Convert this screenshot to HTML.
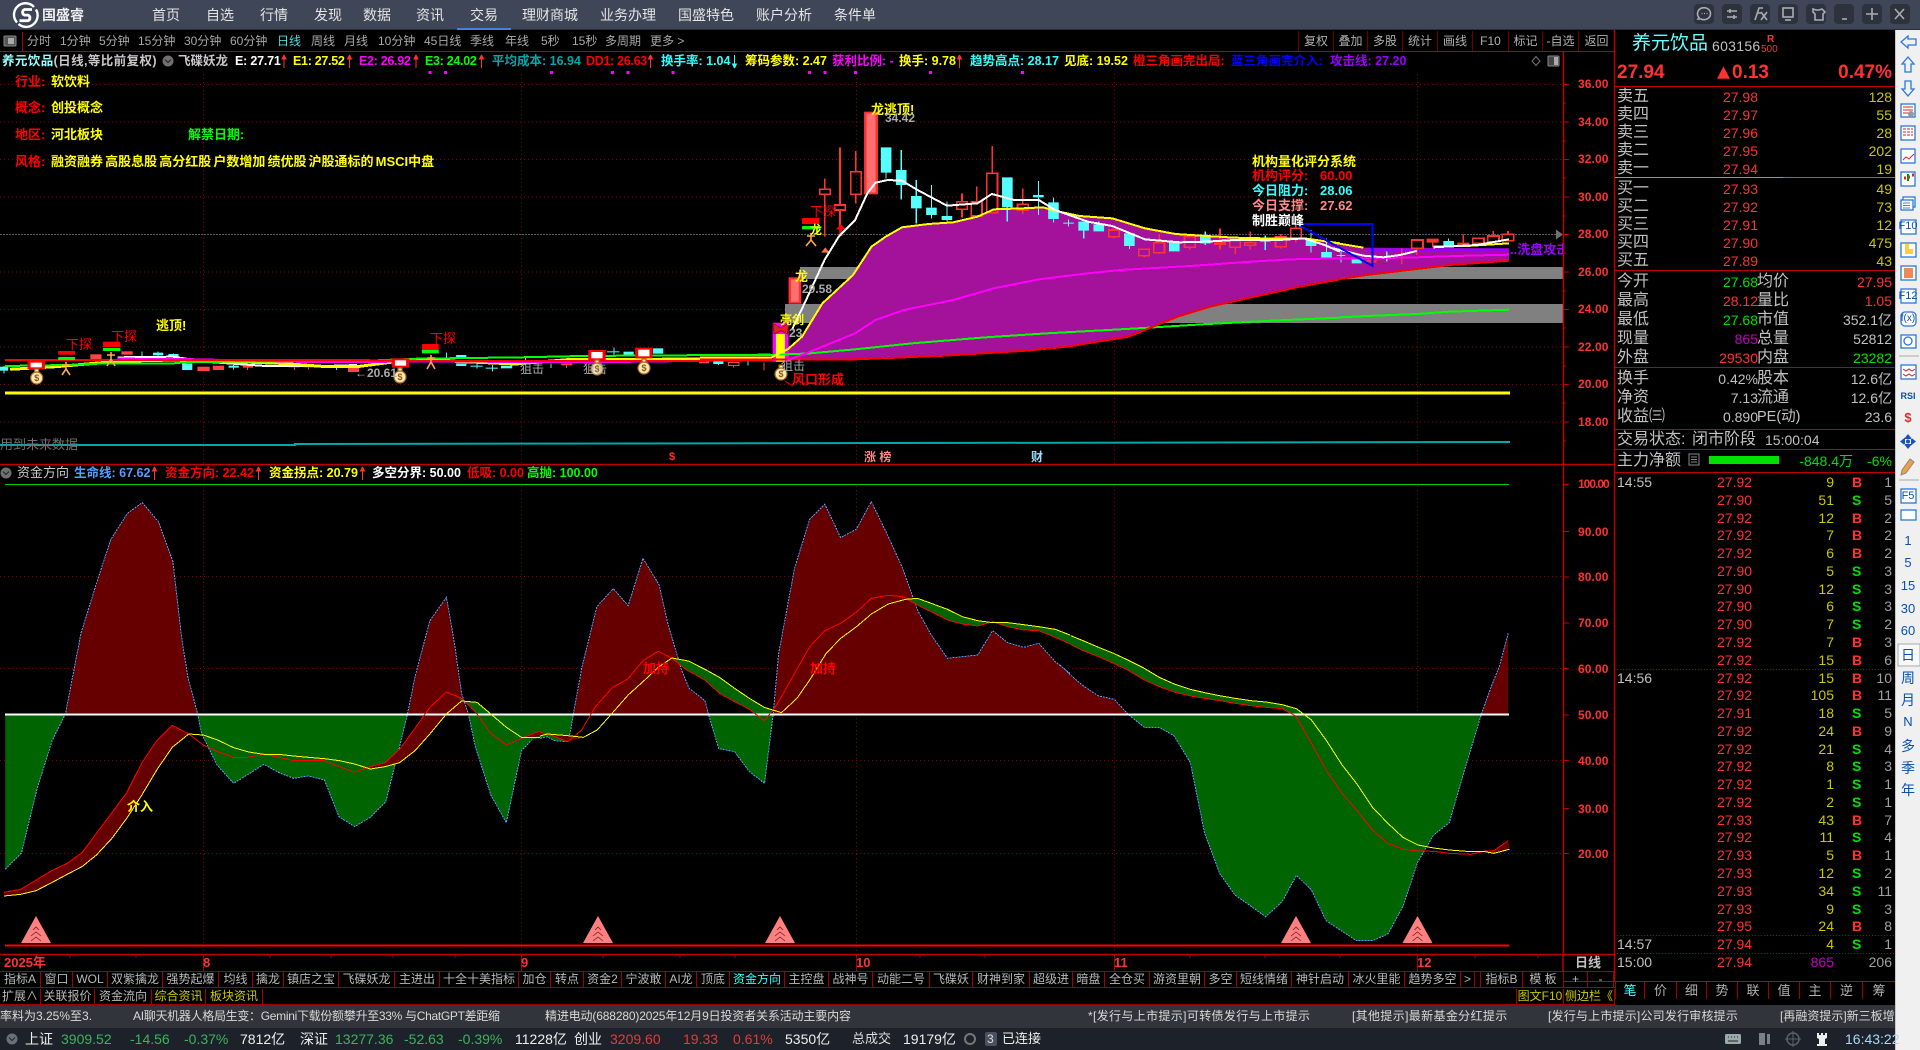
<!DOCTYPE html>
<html lang="zh"><head><meta charset="utf-8"><title>国盛睿</title>
<style>
html,body{margin:0;padding:0;background:#000}
body{width:1920px;height:1050px;position:relative;overflow:hidden;font-family:"Liberation Sans","Noto Sans CJK SC",sans-serif;color:#c0c0c0}
.t{position:absolute;white-space:nowrap;height:18px;line-height:18px;font-size:13px}
.bd{font-weight:700}
.p{position:absolute}
.per{position:absolute;top:32px;font-size:12px;line-height:18px;color:#a8a8a8;white-space:nowrap}
.tb{position:absolute;top:31px;height:20px;line-height:20px;font-size:12px;color:#b0b0b0;text-align:center;border-left:1px solid #6a0000;box-sizing:border-box}
.ax{position:absolute;left:1578px;font-size:12px;font-weight:700;color:#ff3232;height:16px;line-height:16px;letter-spacing:.1px}
.h{position:absolute;top:52px;height:18px;line-height:18px;font-size:12.5px;font-weight:700;white-space:nowrap}
.h2{top:464px}
.c{position:absolute;white-space:nowrap;font-size:16px;color:#c0c0c0;height:20px;line-height:20px;margin-top:1px}
.v{position:absolute;white-space:nowrap;font-size:14px;height:20px;line-height:20px;margin-top:1px}
.l{left:1617px}
.a{right:162px;color:#ff3232}
.y{right:28px;color:#c8c800}
.k{left:1757px}
.rr{right:28px}
.r{position:absolute;left:1615px;width:280px;height:18px;line-height:18px;font-size:14px}
.r i,.r b,.r u,.r s,.r em{position:absolute;top:0;font-style:normal;text-decoration:none;font-weight:400}
.r i{left:2px;color:#c0c0c0}.r b{left:102px;color:#ff3232}.r u{right:61px;color:#c8c800}.r s{left:237px;font-weight:700;color:#00e000}.r s.B{color:#ff3232}.r em{right:3px;color:#a0a0a0}
.btn{position:absolute;top:972px;height:15px;line-height:15px;font-size:12px;color:#b8b8b8;text-align:center;border-right:1px solid #a00000;white-space:nowrap;overflow:hidden;box-sizing:border-box}
.btn2{top:989px}
.tab{position:absolute;top:982px;height:17px;line-height:17px;font-size:13px;color:#b0b0b0;text-align:center;border-left:1px solid #a00000;box-sizing:border-box}
.tk{position:absolute;top:1006px;font-size:12px;line-height:20px;color:#d8d8d8;white-space:nowrap}
.st{position:absolute;top:1029px;font-size:14px;line-height:20px;white-space:nowrap}
.sn{position:absolute;left:1896px;width:24px;text-align:center;font-size:13px;line-height:16px;color:#0a50b0}
.lg{position:absolute;font-size:12px;font-weight:700;white-space:nowrap;height:16px;line-height:16px}
</style></head><body>

<svg class="p" style="left:0;top:0" width="1920" height="1050" viewBox="0 0 1920 1050">
<defs>
<clipPath id="ab"><rect x="-500" y="-100" width="4000" height="802"/></clipPath>
<clipPath id="be"><rect x="-500" y="702" width="4000" height="1000"/></clipPath>
<style>.ns{vector-effect:non-scaling-stroke;fill:none;shape-rendering:crispEdges}</style>
</defs>
<rect width="1920" height="1050" fill="#000"/>

<!-- grid main -->
<g stroke="#8a0000" stroke-width="1" stroke-dasharray="1 3" fill="none">
<path d="M0 84.5H1563M0 122H1563M0 159.5H1563M0 197H1563M0 272H1563M0 309.5H1563M0 347H1563M0 384.5H1563M0 422H1563"/>
<path d="M203.5 74V464M521.5 74V464M856.5 74V464M1114.5 74V464M1417.5 74V464"/>
<path d="M0 576.5H1563M0 668.5H1563M0 760.5H1563M0 853.5H1563"/>
<path d="M203.5 486V954M521.5 486V954M856.5 486V954M1114.5 486V954M1417.5 486V954"/>
</g>
<path d="M0 234.5H1563" stroke="#5a5a5a" stroke-dasharray="2 1" fill="none"/>

<!-- gray zones -->
<rect x="800" y="267" width="763" height="12" fill="#808080"/>
<rect x="785" y="304" width="778" height="19" fill="#808080"/>

<!-- main chart zoom7 coords -->
<g transform="translate(700,90) scale(.40816,.33333)">
<polygon fill="#a4119a" points="215,778 250,740 300,640 375,555 420,470 455,440 495,412 560,402 620,397 680,380 720,358 790,355 840,352 880,365 930,378 1010,385 1090,415 1165,432 1240,438 1310,443 1380,445 1480,445 1568,460 1568,568 1470,590 1340,625 1250,650 1170,680 1100,715 1050,740 900,770 800,782 600,797 380,808 215,810"/>
</g>
<g transform="translate(1100,140) scale(.33333,.33333)">
<polygon fill="#a4119a" points="700,308 790,323 1227,325 1227,362 1050,375 950,387 800,405 700,415"/>
<rect x="800" y="325" width="427" height="10" fill="#9900ff"/>
</g>

<!-- left flat region -->
<g transform="translate(0,300) scale(.5102,.33333)">
<path class="ns" stroke="#3ff" stroke-width="1" d="M8 198V220M278 155V170M310 155V172M340 160V176M458 195V208M660 195V210M875 158V175M935 190V205M965 195V215M1030 168V195M1080 190V204M1203 142V165M1408 180V195M1466 180V196"/>
<g fill="#5ff"><rect x="0" y="200" width="16" height="12"/><rect x="300" y="158" width="20" height="8"/><rect x="330" y="162" width="20" height="10"/><rect x="357" y="190" width="20" height="20"/><rect x="448" y="197" width="20" height="6"/><rect x="650" y="198" width="20" height="6"/><rect x="894" y="165" width="20" height="9"/><rect x="894" y="190" width="20" height="8"/><rect x="922" y="197" width="24" height="3"/><rect x="952" y="203" width="24" height="3"/><rect x="982" y="197" width="22" height="8"/><rect x="1190" y="154" width="24" height="3"/><rect x="1222" y="155" width="20" height="10"/><rect x="1280" y="145" width="20" height="16"/><rect x="1398" y="184" width="20" height="8"/></g>
<g fill="#f44"><rect x="177" y="163" width="22" height="14"/><rect x="387" y="200" width="24" height="13"/><rect x="417" y="197" width="22" height="13"/><rect x="238" y="154" width="22" height="10"/><rect x="476" y="197" width="20" height="6"/><rect x="566" y="198" width="22" height="4"/><rect x="595" y="198" width="20" height="4"/><rect x="682" y="204" width="22" height="12"/><rect x="1100" y="190" width="22" height="6"/><rect x="1370" y="182" width="20" height="8"/></g>
<path class="ns" stroke="#f44" stroke-width="1" d="M1428 187h20v10h-20zM1438 197V203M1497 188V212M485 203V210M577 202V210M605 202V208M1110 196V204"/>
<polyline class="ns" stroke="#fff" stroke-width="2" points="230,172 340,170 400,185 520,198 640,198 700,195"/>
<polyline class="ns" stroke="#ff0" stroke-width="3" points="20,208 110,200 230,184 340,180 480,186 550,190 640,200 700,200 810,178 1010,192 1120,178 1280,178 1510,175"/>
<polyline class="ns" stroke="#0f0" stroke-width="2" points="10,198 130,195 210,190 340,190 370,186 720,182 820,176 1020,172 1140,168 1510,164"/>
<polyline class="ns" stroke="#f0f" stroke-width="2" points="230,176 360,177 600,186 700,186 860,184 1010,186 1130,186 1200,186 1500,180"/>
<polyline class="ns" stroke="#f00" stroke-width="2" points="10,180 700,180 800,183 1000,183 1520,182"/>
<g fill="#fff" stroke="#f00" stroke-width="6"><rect x="57" y="185" width="28" height="20"/><rect x="771" y="178" width="28" height="22"/><rect x="1156" y="153" width="28" height="25"/><rect x="1248" y="146" width="28" height="26"/></g>
<g fill="#f00"><rect x="114" y="153" width="33" height="11"/><rect x="202" y="125" width="34" height="17"/><rect x="827" y="132" width="33" height="18"/></g>
<g fill="#0f0"><rect x="114" y="171" width="33" height="9"/><rect x="202" y="144" width="34" height="9"/><rect x="827" y="150" width="33" height="10"/></g>
</g>

<!-- candles zoom7 -->
<g transform="translate(700,90) scale(.40816,.33333)">
<path class="ns" stroke="#f33" stroke-width="1.6" d="M293 298h26v15h-26zM306 265V298M306 313V440M330 345h26v15h-26zM343 172V345M343 360V410M369 245h26v68h-26zM382 183V245M382 313V340M629 335h26v23h-26zM642 310V335M642 358V383M665 335h26v43h-26zM678 290V335M703 250h26v118h-26zM716 168V250M778 343h26v17h-26zM791 295V343M791 360V372M1001 420h26v20h-26zM1014 415V420M1014 440V445M1075 478h26v19h-26zM1088 497V503M1112 458h26v30h-26zM1125 432V458M1125 488V492M1187 440h26v32h-26zM1200 472V480M1261 458h26v5h-26zM1274 415V458M1274 463V478M1298 452h26v20h-26zM1311 448V452M1311 472V492M1335 458h26v8h-26zM1348 425V458M1348 466V478M1410 440h26v30h-26zM1423 432V440M1423 470V475M1447 415h26v33h-26zM1460 405V415M1460 448V458"/>
<path fill="#5ff" d="M443 172h26v76h-26zM480 240h26v45h-26zM517 318h26v37h-26zM554 353h26v22h-26zM592 378h26v12h-26zM740 262h26v90h-26zM816 315h26v7h-26zM853 337h26v50h-26zM890 398h26v3h-26zM927 395h26v27h-26zM964 403h26v21h-26zM1039 430h26v38h-26zM1149 458h26v26h-26zM1225 435h26v25h-26zM1372 452h26v3h-26zM1484 450h26v18h-26zM1522 486h26v19h-26z"/>
<path class="ns" stroke="#5ff" stroke-width="1.2" d="M456 248V265M493 180V240M493 285V328M530 270V318M530 355V400M567 285V353M567 375V385M605 335V378M605 390V395M753 352V395M829 273V315M829 322V375M866 322V337M866 387V398M903 388V410M940 422V446M977 395V403M1052 468V477M1238 425V435M1238 460V465M1385 437V480M1497 420V450M1497 468V488M1535 445V486"/>
<!-- limit candles -->
<rect x="220" y="565" width="25" height="73" fill="#ff7070" stroke="#f33" stroke-width="6"/>
<rect x="405" y="68" width="28" height="242" fill="#ff7070" stroke="#f33" stroke-width="6"/>
<rect x="178" y="698" width="39" height="117" fill="#f0f"/>
<rect x="186" y="732" width="22" height="83" fill="#ff0"/>
<path d="M178 700l20 14 20-14-4 32-16-10-16 10z" fill="#d22" stroke="#800" stroke-width="2"/>
<rect x="250" y="384" width="43" height="18" fill="#f00"/><rect x="250" y="408" width="43" height="10" fill="#0f0"/>
<path d="M345 402l12 16h-8v20h-8v-20h-8z" fill="#f00"/><path d="M307 472l10 16h-20z" fill="#ff7040"/>
<polyline class="ns" stroke="#0f0" stroke-width="2" points="0,795 175,795 270,790 380,778 520,760 700,742 850,730 1000,720 1100,713 1230,703 1400,692 1568,683"/>
<polyline class="ns" stroke="#f00" stroke-width="2" points="0,808 380,808 600,797 800,782 900,770 1050,740 1100,715 1170,680 1250,650 1340,625 1470,590 1568,568"/>
<polyline class="ns" stroke="#f0f" stroke-width="2" points="215,810 260,790 380,730 430,690 500,660 620,630 720,595 830,568 950,550 1030,540 1200,528 1350,515 1450,508 1568,505"/>
<polyline class="ns" stroke="#ff0" stroke-width="2" points="0,802 175,802 215,778 250,740 300,640 375,555 420,470 455,440 495,412 560,402 620,397 680,380 720,358 790,355 840,352 880,365 930,378 1010,385 1090,415 1165,432 1240,438 1310,443 1380,445 1480,445 1568,460"/>
<polyline class="ns" stroke="#fff" stroke-width="2" points="225,720 260,630 305,510 340,440 380,390 410,310 430,278 460,270 495,272 530,298 605,347 680,340 715,312 770,330 830,330 870,360 950,395 1010,408 1090,448 1175,457 1240,455 1310,450 1420,450 1480,445 1530,465 1568,485"/>
</g>

<!-- zoom8 right part -->
<g transform="translate(1100,140) scale(.33333,.33333)">
<path class="ns" stroke="#5ff" stroke-width="1.2" d="M723 335V368M860 335V365"/>
<path fill="#5ff" d="M755 358h30v12h-30zM1030 303h32v15h-32zM710 345h26v3h-26z"/>
<path class="ns" stroke="#5ff" d="M1045 295V303"/>
<path fill="#f33" d="M800 360h30v8h-30zM980 296h36v12h-36zM1072 308h36v10h-36z"/>
<path class="ns" stroke="#f33" stroke-width="1.6" d="M905 325V372M935 300h34v25h-34zM950 325V345M998 308V322M1090 283V308M1118 295h34v15h-34zM1163 288h34v17h-34zM1180 273V288M1207 283h34v19h-34zM1224 273V283M1224 302V305"/>
<polyline class="ns" stroke="#f00" stroke-width="2" points="720,417 800,405 950,387 1050,375 1227,362"/>
<polyline class="ns" stroke="#0f0" stroke-width="2" points="720,532 800,528 950,522 1050,515 1227,509"/>
<polyline class="ns" stroke="#f0f" stroke-width="2" points="720,355 800,355 950,352 1100,347 1227,344"/>
<polyline class="ns" stroke="#ff0" stroke-width="2" points="700,308 790,323"/>
<polyline class="ns" stroke="#ff0" stroke-width="2" points="1000,320 1100,318 1227,310"/>
<polyline class="ns" stroke="#fff" stroke-width="2" points="700,325 790,347 850,352 900,345 950,333"/>
<polyline class="ns" stroke="#fff" stroke-width="2" points="1000,322 1130,315 1227,298"/>
<polygon class="ns" stroke="#00f" stroke-width="2" points="590,252 818,252 818,378"/>
</g>

<path d="M5 393H1510" stroke="#ff0" stroke-width="3"/>
<polyline points="0,445 295,445 295,444 1510,442" stroke="#00a8a8" stroke-width="2" fill="none"/>
<path d="M1563 234.5l-7-5v10z" fill="#707070"/>

<!-- money bags -->
<g fill="#ffe8b0" stroke="#a06a20" stroke-width="1.2">
<rect x="34.7" y="369" width="4" height="4"/><rect x="398" y="368" width="4" height="4"/><rect x="595" y="360" width="4" height="4"/><rect x="642" y="359" width="4" height="4"/><rect x="779" y="365" width="4" height="4"/>
<ellipse cx="36.7" cy="378" rx="6" ry="6"/><ellipse cx="400" cy="377" rx="6" ry="6"/><ellipse cx="597" cy="369" rx="6" ry="6"/><ellipse cx="644" cy="368" rx="6" ry="6"/><ellipse cx="781" cy="374" rx="6" ry="6"/>
</g>
<g fill="#8a5a10" font-size="9" font-weight="700" font-family="Liberation Sans,sans-serif" text-anchor="middle">
<text x="36.7" y="381">$</text><text x="400" y="380">$</text><text x="597" y="372">$</text><text x="644" y="371">$</text><text x="781" y="377">$</text>
</g>
<!-- persons -->
<g stroke="#ffa850" stroke-width="1.6" fill="none">
<path d="M66 362V369M62 365H70M66 369L62 375M66 369L70 375"/>
<path d="M111 352V359M107 355H115M111 359L107 366M111 359L115 366"/>
<path d="M431 355V362M427 358H435M431 362L427 369M431 362L435 369"/>
<path d="M811 233V240M807 236H815M811 240L806 246M811 240L816 246"/>
</g>
<path d="M785 381l8 5" stroke="#f00" fill="none"/>

<!-- lower pane -->
<path d="M5 484.5H1509" stroke="#0c0" stroke-width="1"/>
<g transform="translate(0,480) scale(.34444,.33333)">
<g id="b1"><polygon fill="#660000" clip-path="url(#ab)" points="15,702 15,1168 62,1120 108,925 152,780 190,702 235,460 280,310 322,178 370,100 413,68 460,125 502,245 527,470 545,590 574,702 585,760 630,855 678,910 722,882 766,853 810,878 852,895 896,888 942,900 984,1010 1030,1040 1075,1012 1120,965 1160,800 1183,702 1205,590 1248,422 1296,352 1318,480 1340,640 1360,702 1380,800 1425,945 1470,1028 1514,812 1548,775 1568,760 1568,702"/>
<polygon fill="#006400" clip-path="url(#be)" points="15,702 15,1168 62,1120 108,925 152,780 190,702 235,460 280,310 322,178 370,100 413,68 460,125 502,245 527,470 545,590 574,702 585,760 630,855 678,910 722,882 766,853 810,878 852,895 896,888 942,900 984,1010 1030,1040 1075,1012 1120,965 1160,800 1183,702 1205,590 1248,422 1296,352 1318,480 1340,640 1360,702 1380,800 1425,945 1470,1028 1514,812 1548,775 1568,760 1568,702"/>
<polyline class="ns" stroke="#4a9fff" points="15,1168 62,1120 108,925 152,780 190,702 235,460 280,310 322,178 370,100 413,68 460,125 502,245 527,470 545,590 574,702 585,760 630,855 678,910 722,882 766,853 810,878 852,895 896,888 942,900 984,1010 1030,1040 1075,1012 1120,965 1160,800 1183,702 1205,590 1248,422 1296,352 1318,480 1340,640 1360,702 1380,800 1425,945 1470,1028 1514,812 1548,775 1568,760" stroke-dasharray="2 1"/></g>
<polygon fill="#660000" points="12,1237 60,1228 105,1200 150,1172 195,1150 238,1118 280,1060 325,998 368,938 412,848 455,782 500,736 548,762 500,802 455,870 412,945 368,1015 325,1075 280,1125 238,1160 195,1183 150,1208 105,1232 60,1243 12,1248"/>
<polygon fill="#660000" points="1075,860 1118,848 1160,808 1205,745 1248,682 1296,636 1320,645 1296,702 1248,762 1205,812 1160,848 1118,860 1075,867"/>
<polygon fill="#006400" points="1320,645 1340,655 1380,695 1425,760 1470,795 1514,775 1470,742 1425,702 1385,667 1340,663"/>
<polygon fill="#660000" points="1514,775 1568,753 1568,772 1514,772"/>
<polygon fill="#660000" points="750,824 766,820 780,824"/>
</g>
<g transform="translate(530,480) scale(.34444,.33333)">
<polygon fill="#660000" clip-path="url(#ab)" points="29,702 29,775 50,770 70,782 110,785 116,760 126,702 150,565 194,380 242,326 285,377 328,235 375,315 400,430 420,500 440,570 462,625 508,662 518,702 548,806 594,815 637,875 681,910 706,702 722,520 768,265 812,118 856,73 902,173 948,147 991,65 1038,165 1082,265 1125,390 1165,465 1212,535 1255,530 1300,525 1343,452 1387,488 1433,502 1477,490 1525,545 1568,580 1568,702"/>
<polygon fill="#006400" clip-path="url(#be)" points="0,702 0,780 50,770 70,782 110,785 116,760 126,702 150,565 194,380 242,326 285,377 328,235 375,315 400,430 420,500 440,570 462,625 508,662 518,702 548,806 594,815 637,875 681,910 706,702 722,520 768,265 812,118 856,73 902,173 948,147 991,65 1038,165 1082,265 1125,390 1165,465 1212,535 1255,530 1300,525 1343,452 1387,488 1433,502 1477,490 1525,545 1568,580 1568,702"/>
<polyline class="ns" stroke="#4a9fff" stroke-dasharray="2 1" points="29,775 50,770 70,782 110,785 116,760 126,702 150,565 194,380 242,326 285,377 328,235 375,315 400,430 420,500 440,570 462,625 508,662 518,702 548,806 594,815 637,875 681,910 706,702 722,520 768,265 812,118 856,73 902,173 948,147 991,65 1038,165 1082,265 1125,390 1165,465 1212,535 1255,530 1300,525 1343,452 1387,488 1433,502 1477,490 1525,545 1568,580"/>
<polygon fill="#660000" points="0,762 25,755 60,765 110,785 155,772 50,762 0,775"/>
<polygon fill="#006400" points="412,535 455,570 508,600 550,640 594,665 637,688 680,722 706,690 680,682 637,655 594,625 550,592 508,568 460,543 412,534"/>
<polygon fill="#006400" points="1090,358 1125,375 1165,395 1212,420 1255,432 1300,438 1330,428 1300,422 1255,410 1212,388 1165,370 1125,355"/>
<polygon fill="#006400" points="1345,428 1387,440 1433,450 1477,452 1525,472 1568,492 1568,465 1525,448 1477,440 1433,434 1387,428"/>
</g>
<g transform="translate(1060,480) scale(.35714,.33333)">
<polygon fill="#660000" clip-path="url(#ab)" points="0,702 0,555 40,595 68,620 108,648 152,658 190,702"/>
<polygon fill="#006400" clip-path="url(#be)" points="190,702 236,742 278,742 320,768 365,848 405,1060 447,1180 490,1245 576,1310 622,1265 662,1186 704,1230 745,1322 830,1382 875,1382 918,1362 960,1280 1002,1145 1046,1065 1090,1028 1130,880 1180,702"/>
<polygon fill="#660000" clip-path="url(#ab)" points="1180,702 1208,618 1230,560 1255,460 1255,702"/>
<polyline class="ns" stroke="#4a9fff" stroke-dasharray="2 1" points="0,555 40,595 68,620 108,648 152,658 190,702 236,742 278,742 320,768 365,848 405,1060 447,1180 490,1245 576,1310 622,1265 662,1186 704,1230 745,1322 830,1382 875,1382 918,1362 960,1280 1002,1145 1046,1065 1090,1028 1130,880 1180,702 1208,618 1230,560 1255,460"/>
<polygon fill="#006400" points="0,478 60,510 108,530 150,550 190,570 236,600 278,620 320,636 365,648 405,655 447,662 490,670 535,677 576,682 622,686 660,708 680,702 662,686 622,674 576,666 535,662 490,655 447,647 405,638 365,628 320,612 278,592 236,565 190,540 150,520 108,502 60,480 0,455"/>
<polygon fill="#660000" points="1190,1113 1215,1112 1255,1082 1258,1108 1215,1120 1190,1115"/>
</g>
<path d="M5 714.5H1509" stroke="#fff" stroke-width="2"/>
<g transform="translate(0,480) scale(.34444,.33333)">
<polyline class="ns" stroke="#f00" points="12,1237 60,1228 105,1200 150,1172 195,1150 238,1118 280,1060 325,998 368,938 412,848 455,782 500,736 548,762 590,795 632,815 678,832 722,832 766,822 810,832 852,842 896,842 942,842 985,860 1030,877 1075,860 1118,848 1160,808 1205,745 1248,682 1296,636 1340,655 1380,695 1425,760 1470,795 1514,775 1568,753"/>
<polyline class="ns" stroke="#ff0" points="12,1248 60,1243 105,1232 150,1208 195,1183 238,1160 280,1125 325,1075 368,1015 412,945 455,870 500,802 548,762 590,765 632,780 678,803 722,816 766,823 810,823 852,828 896,832 942,836 985,842 1030,852 1075,867 1118,860 1160,848 1205,812 1248,762 1296,702 1340,663 1385,667 1425,702 1470,742 1514,772 1568,772"/>
</g>
<g transform="translate(530,480) scale(.34444,.33333)">
<polyline class="ns" stroke="#f00" points="29,757 60,765 110,785 150,750 190,680 240,622 285,596 328,542 372,514 412,535 455,570 508,600 550,640 594,665 637,688 680,722 706,690 725,660 768,580 812,500 856,452 902,430 948,396 991,355 1040,346 1082,350 1125,375 1165,395 1212,420 1255,432 1300,438 1343,425 1387,440 1433,450 1477,452 1525,472 1568,492"/>
<polyline class="ns" stroke="#ff0" points="29,768 50,762 110,767 155,772 195,750 240,698 285,645 328,605 372,562 412,534 460,543 508,568 550,592 594,625 637,655 680,682 730,698 775,655 812,600 860,520 902,475 948,440 991,402 1040,372 1090,358 1125,355 1165,370 1212,388 1255,410 1300,422 1343,428 1387,428 1433,434 1477,440 1525,448 1568,465"/>
</g>
<g transform="translate(1060,480) scale(.35714,.33333)">
<polyline class="ns" stroke="#f00" points="30,494 60,510 108,530 150,550 190,570 236,600 278,620 320,636 365,648 405,655 447,662 490,670 535,677 576,682 622,686 660,708 704,790 745,870 790,940 830,990 875,1050 918,1090 960,1108 1002,1113 1046,1114 1090,1120 1150,1123 1190,1113 1215,1112 1255,1082"/>
<polyline class="ns" stroke="#ff0" points="30,467 60,480 108,502 150,520 190,540 236,565 278,592 320,612 365,628 405,638 447,647 490,655 535,662 576,666 622,674 662,686 704,720 745,780 790,855 830,910 875,982 918,1030 960,1072 1002,1095 1046,1104 1090,1110 1150,1115 1190,1115 1215,1120 1258,1108"/>
</g>

<!-- bottom line & triangles -->
<path d="M5 945.5H1509" stroke="#f00" stroke-width="2"/>
<g fill="#ff8080">
<path d="M36 916l15 27h-30z"/><path d="M598 916l15 27h-30z"/><path d="M780 916l15 27h-30z"/><path d="M1296 916l15 27h-30z"/><path d="M1417.5 916l15 27h-30z"/>
</g>
<g fill="none" stroke="#702020" stroke-width=".8">
<path d="M31 936l5-4 5 4M31 941l5-4 5 4M33 930l3-3 3 3"/>
<path d="M593 936l5-4 5 4M593 941l5-4 5 4M595 930l3-3 3 3"/>
<path d="M775 936l5-4 5 4M775 941l5-4 5 4M777 930l3-3 3 3"/>
<path d="M1291 936l5-4 5 4M1291 941l5-4 5 4M1293 930l3-3 3 3"/>
<path d="M1412.5 936l5-4 5 4M1412.5 941l5-4 5 4M1414.5 930l3-3 3 3"/>
</g>

<!-- frame lines -->
<g stroke="#b00000" fill="none" stroke-width="1">
<path d="M0 51.5H1615"/>
<path d="M22.5 32V51"/>
</g>
<g stroke="#c00000" fill="none" stroke-width="1.5">
<path d="M1563.5 52V954M1614.5 30V981M0 464.5H1615M0 954.5H1615M1563 955V971"/>
</g>
<!-- axis ticks -->
<path stroke="#c00000" fill="none" d="M1563 84.5h6M1563 122h6M1563 159.5h6M1563 197h6M1563 234.5h6M1563 272h6M1563 309.5h6M1563 347h6M1563 384.5h6M1563 422h6M1563 103h3M1563 141h3M1563 178h3M1563 216h3M1563 253h3M1563 291h3M1563 328h3M1563 366h3M1563 403h3M1563 441h3M1563 484.5h6M1563 531.5h6M1563 577h6M1563 623h6M1563 668.5h6M1563 715h6M1563 760.5h6M1563 808.5h6M1563 853.5h6"/>
<path stroke="#a00000" fill="none" d="M203.5 955V971M521.5 955V971M856.5 955V971M1114.5 955V971M1417.5 955V971M70 955v3M136 955v3M270 955v3M331 955v3M393 955v3M455 955v3M603 955v3M680 955v3M735 955v3M920 955v3M985 955v3M1190 955v3M1265 955v3M1340 955v3M1475 955v3M1538 955v3"/>

<!-- header dots and arrows -->
<g fill="#f0f">
<rect x="428.5" y="71" width="3" height="3"/><rect x="444" y="71" width="3" height="3"/><rect x="550" y="71" width="3" height="3"/><rect x="611" y="71" width="3" height="3"/><rect x="626.5" y="71" width="3" height="3"/><rect x="671.5" y="71" width="3" height="3"/><rect x="808" y="71" width="3" height="3"/><rect x="823.5" y="71" width="3" height="3"/><rect x="854" y="71" width="3" height="3"/><rect x="929" y="71" width="3" height="3"/><rect x="1021" y="71" width="3" height="3"/>
</g>
<g stroke="#f33" fill="#f33" stroke-width="1">
<path d="M284 68V55l-2 4h4l-2-4M349.5 68V55l-2 4h4l-2-4M416 68V55l-2 4h4l-2-4M481.5 68V55l-2 4h4l-2-4M650.5 68V55l-2 4h4l-2-4M959.5 68V55l-2 4h4l-2-4"/>
<path d="M154.5 480V467l-2 4h4l-2-4M258.5 480V467l-2 4h4l-2-4M362.5 480V467l-2 4h4l-2-4"/>
</g>
<path d="M734.5 55V68l-2-4h4l-2 4" stroke="#3ff" fill="#3ff"/>
<circle cx="168" cy="61" r="5.5" fill="#707070"/><path d="M165 59.5l3 3 3-3" stroke="#222" fill="none"/>
<circle cx="6" cy="473" r="5.5" fill="#707070"/><path d="M3 471.5l3 3 3-3" stroke="#222" fill="none"/>
<rect x="4" y="36" width="12" height="10" fill="#555" stroke="#888" rx="1"/><rect x="8" y="38" width="6" height="6" fill="#aaa"/>
<path d="M1536 56.5l4 4.5-4 4.5-4-4.5z" fill="none" stroke="#777"/><rect x="1548" y="56" width="11" height="10" fill="#444" stroke="#888" rx="1"/><rect x="1554" y="57" width="4" height="8" fill="#aaa"/>

<!-- right panel -->
<g fill="none" stroke="#c00000" stroke-width="1">
<path d="M1615 86.5H1895M1615 270.5H1895M1615 367.5H1895M1615 429.5H1895M1615 449.5H1895M1615 472.5H1895M1563 981.5H1895"/>
</g>
<path d="M1615 177.5H1783" stroke="#c89030"/><path d="M1783 177.5H1895" stroke="#3080c0"/>
<path d="M1617 669.5H1895M1617 935.5H1895M1617 953.5H1895" stroke="#a00000" stroke-dasharray="1 2" fill="none"/>
<rect x="1709" y="456" width="70" height="8" fill="#00e000"/>
<rect x="1689" y="454" width="10" height="11" fill="none" stroke="#888"/><path d="M1691 457h6M1691 459.5h6M1691 462h6" stroke="#888"/>
<path d="M1723.5 66.5L1730 78.7H1717z" fill="#ff3232"/>

<!-- top bar -->
<rect x="0" y="0" width="1920" height="30" fill="#3f4658"/>
<rect x="0" y="29" width="1920" height="1" fill="#2a2e38"/>
<rect x="457" y="28" width="54" height="2" fill="#4a7fe0"/>
<g fill="none" stroke="#fff" stroke-width="2.4">
<path d="M34 7A11.5 11.5 0 0 0 17 22.5"/>
<path d="M18.5 24A11.5 11.5 0 0 0 36 9.5"/>
<path d="M32 9.5H24.5a3 3 0 0 0 0 5.6h3.5a3 3 0 0 1 0 5.6H19.5" stroke-width="2.8"/>
</g>
<g fill="#2e323c">
<rect x="1694" y="4" width="20" height="20" rx="4"/><rect x="1722" y="4" width="20" height="20" rx="4"/><rect x="1750" y="4" width="20" height="20" rx="4"/><rect x="1778" y="4" width="20" height="20" rx="4"/><rect x="1806" y="4" width="20" height="20" rx="4"/><rect x="1834" y="4" width="20" height="20" rx="4"/><rect x="1862" y="4" width="20" height="20" rx="4"/><rect x="1890" y="4" width="20" height="20" rx="4"/>
</g>
<g fill="none" stroke="#a8acb4" stroke-width="1.6" transform="translate(-28,0)">
<path d="M1726 19l1-1.5a6.5 6 0 1 1 2 1.5z"/><path d="M1729.5 13.5h1M1732 13.5h1M1734.5 13.5h1" stroke-width="1.2"/>
<path d="M1755 11h10M1755 17h10M1758 9v4M1762 15v4"/>
<path d="M1783 20l4-12h4M1785 13h4M1789 12l6 8M1795 12l-6 8"/>
<rect x="1811" y="8" width="10" height="9"/><path d="M1813 20h6"/>
<path d="M1841 9l3 1 3 0 3-1 3 3-2 2v6h-8v-6l-2-2z"/>
<path d="M1870 19h5"/>
<path d="M1900 8v12M1894 14h12"/>
<path d="M1923 9l9 10M1932 9l-9 10"/>
</g>

<!-- ext rows -->
<rect x="0" y="971" width="1615" height="1" fill="#a00000"/>
<rect x="0" y="987" width="1615" height="1" fill="#a00000"/>
<rect x="0" y="1004" width="1615" height="1" fill="#a00000"/>

<!-- bottom bars -->
<rect x="1615" y="982" width="280" height="17" fill="#000"/>
<rect x="0" y="1005" width="1896" height="23" fill="#31353b"/>
<rect x="0" y="1028" width="1896" height="22" fill="#1d2129"/>
<circle cx="12" cy="1039" r="5.5" fill="#6a7078"/><path d="M9 1037.5l3 3 3-3" stroke="#222" fill="none"/>
<circle cx="970" cy="1039" r="5" fill="none" stroke="#777" stroke-width="2"/>
<rect x="985" y="1032" width="12" height="14" rx="2" fill="#4a5060"/>
<rect x="1725" y="1034" width="16" height="10" rx="1.5" fill="#9aa"/><path d="M1728 1037h1M1731 1037h1M1734 1037h1M1737 1037h1M1728 1041h10" stroke="#222"/>
<path d="M1759 1033h6v12h-6zM1767 1034h3v10h-3z" fill="#7a8088"/>
<circle cx="1793" cy="1039" r="6" fill="none" stroke="#5a6068" stroke-width="1.5"/><path d="M1793 1031v16M1785 1039h16" stroke="#5a6068"/>
<path d="M1817 1033h2v2h2v-2h2v2h2v-2h2v5l-2 1v5h2v2h-10v-2h2v-5l-2-1z" fill="#eee"/>

<!-- sidebar -->
<rect x="1896" y="30" width="24" height="1020" fill="#f0f0f0"/>
<rect x="1895" y="30" width="1" height="1020" fill="#c8c8c8"/>
<g fill="none" stroke="#2a78d8" stroke-width="1.3">
<path d="M1901 42l7-6v3h8v6h-8v3z"/>
<path d="M1908 57l6 7h-3v8h-6v-8h-3z"/>
<path d="M1908 96l6-7h-3v-8h-6v8h-3z"/>
<rect x="1901" y="104" width="14" height="13" fill="#fff"/>
<rect x="1901" y="126" width="14" height="14" fill="#fff"/>
<rect x="1901" y="149" width="14" height="14" fill="#fff"/>
<rect x="1901" y="172" width="14" height="14" fill="#fff"/>
<rect x="1903" y="197" width="12" height="10" fill="#fff"/><rect x="1901" y="200" width="12" height="10" fill="#fff"/>
<rect x="1901" y="220" width="15" height="14" fill="#fff"/>
<rect x="1901" y="243" width="15" height="14" fill="#fff"/>
<rect x="1901" y="266" width="15" height="14" fill="#fff"/>
<rect x="1901" y="289" width="15" height="14" fill="#fff"/>
<rect x="1901" y="312" width="15" height="14" rx="4" fill="#fff"/>
<rect x="1901" y="335" width="15" height="13" fill="#fff"/><circle cx="1908" cy="341" r="4"/>
<rect x="1901" y="365" width="15" height="14" fill="#fff"/>
<rect x="1901" y="489" width="15" height="14" fill="#fff"/>
<rect x="1901" y="510" width="15" height="10" fill="#fff"/>
</g>
<path d="M1903 107h10M1903 110h10M1903 113h6" stroke="#d22" stroke-width="1"/><circle cx="1911" cy="114" r="3" fill="#999"/>
<path d="M1903 129h10M1903 132h10M1903 135h10" stroke="#c22" stroke-dasharray="3 1"/>
<path d="M1903 160l3-3 3 2 5-5" stroke="#d22" fill="none"/>
<path d="M1904 178h2M1908 177h2M1912 175h2" stroke="#d22" stroke-width="3"/><path d="M1908 174v7" stroke="#090" stroke-width="2"/>
<path d="M1903 203h7M1903 205.5h7M1903 208h7" stroke="#48c"/>
<path d="M1905 244h4v5h4v5h-8z" fill="#fc4"/>
<rect x="1904" y="268" width="9" height="10" fill="#e85"/>
<path d="M1903 369l3 2 3-2 3 2 3-2M1903 374l3 2 3-2 3 2 3-2" stroke="#c22" fill="none"/>
<path d="M1908 434l4 5h-8zM1908 449l4-5h-8zM1900 441.5l5-4v8zM1916 441.5l-5-4v8z" fill="#1a50c0"/><circle cx="1908" cy="441.5" r="2" fill="#1a50c0"/>
<path d="M1902 470l8-11 4 3-8 11-5 2z" fill="#f0a040" stroke="#888"/>
<path d="M1899 356h20M1899 480h20" stroke="#aaa"/>
<rect x="1898" y="644" width="22" height="22" fill="#f8f8f8" stroke="#aaa"/>
</svg>

<!-- top nav -->
<div class="t bd" style="left:42px;top:6px;font-size:14px;color:#eee">国盛睿</div>
<div class="p" style="left:0;top:0">
<span class="t" style="left:152px;top:6px;font-size:14px;color:#e4e4e4">首页</span>
<span class="t" style="left:206px;top:6px;font-size:14px;color:#e4e4e4">自选</span>
<span class="t" style="left:260px;top:6px;font-size:14px;color:#e4e4e4">行情</span>
<span class="t" style="left:314px;top:6px;font-size:14px;color:#e4e4e4">发现</span>
<span class="t" style="left:363px;top:6px;font-size:14px;color:#e4e4e4">数据</span>
<span class="t" style="left:416px;top:6px;font-size:14px;color:#e4e4e4">资讯</span>
<span class="t" style="left:470px;top:6px;font-size:14px;color:#e4e4e4">交易</span>
<span class="t" style="left:522px;top:6px;font-size:14px;color:#e4e4e4">理财商城</span>
<span class="t" style="left:600px;top:6px;font-size:14px;color:#e4e4e4">业务办理</span>
<span class="t" style="left:678px;top:6px;font-size:14px;color:#e4e4e4">国盛特色</span>
<span class="t" style="left:756px;top:6px;font-size:14px;color:#e4e4e4">账户分析</span>
<span class="t" style="left:834px;top:6px;font-size:14px;color:#e4e4e4">条件单</span>
</div>

<!-- periods -->
<span class="per" style="left:27px">分时</span><span class="per" style="left:60px">1分钟</span><span class="per" style="left:99px">5分钟</span><span class="per" style="left:138px">15分钟</span><span class="per" style="left:184px">30分钟</span><span class="per" style="left:230px">60分钟</span><span class="per" style="left:277px;color:#44dddd">日线</span><span class="per" style="left:311px">周线</span><span class="per" style="left:344px">月线</span><span class="per" style="left:378px">10分钟</span><span class="per" style="left:424px">45日线</span><span class="per" style="left:470px">季线</span><span class="per" style="left:505px">年线</span><span class="per" style="left:541px">5秒</span><span class="per" style="left:572px">15秒</span><span class="per" style="left:605px">多周期</span><span class="per" style="left:650px">更多 &gt;</span>
<span class="tb" style="left:1298px;width:35px">复权</span><span class="tb" style="left:1333px;width:34px">叠加</span><span class="tb" style="left:1367px;width:35px">多股</span><span class="tb" style="left:1402px;width:35px">统计</span><span class="tb" style="left:1437px;width:35px">画线</span><span class="tb" style="left:1472px;width:36px">F10</span><span class="tb" style="left:1508px;width:34px">标记</span><span class="tb" style="left:1542px;width:36px">-自选</span><span class="tb" style="left:1578px;width:36px">返回</span>

<!-- main header -->
<span class="h" style="left:2px;color:#9ff;letter-spacing:.4px">养元饮品<span style="color:#c8c8c8">(日线,等比前复权)</span></span>
<span class="h" style="left:178px;color:#c8c8c8">飞碟妖龙</span>
<span class="h" style="left:235px;color:#fff;letter-spacing:-.2px">E: 27.71</span>
<span class="h" style="left:293px;color:#ff0;letter-spacing:-.3px">E1: 27.52</span>
<span class="h" style="left:359px;color:#f0f;letter-spacing:-.3px">E2: 26.92</span>
<span class="h" style="left:425px;color:#0f0;letter-spacing:-.3px">E3: 24.02</span>
<span class="h" style="left:492px;color:#00a8a8">平均成本: 16.94</span>
<span class="h" style="left:586px;color:#f00;letter-spacing:-.3px">DD1: 26.63</span>
<span class="h" style="left:661px;color:#3ff">换手率: 1.04</span>
<span class="h" style="left:745px;color:#ff0">筹码参数: 2.47</span>
<span class="h" style="left:832px;color:#f0f">获利比例: -</span>
<span class="h" style="left:899px;color:#ff0">换手: 9.78</span>
<span class="h" style="left:970px;color:#3ff">趋势高点: 28.17</span>
<span class="h" style="left:1064px;color:#ff0">见底: 19.52</span>
<span class="h" style="left:1133px;color:#f00">橙三角画完出局:</span>
<span class="h" style="left:1231px;color:#00f">蓝三角画完介入:</span>
<span class="h" style="left:1330px;color:#90f">攻击线: 27.20</span>

<!-- left annotations -->
<span class="lg" style="left:15px;top:74px;color:#f00;font-size:13px">行业:</span><span class="lg" style="left:51px;top:74px;color:#ff0;font-size:13px">软饮料</span>
<span class="lg" style="left:15px;top:100px;color:#f00;font-size:13px">概念:</span><span class="lg" style="left:51px;top:100px;color:#ff0;font-size:13px">创投概念</span>
<span class="lg" style="left:15px;top:127px;color:#f00;font-size:13px">地区:</span><span class="lg" style="left:51px;top:127px;color:#ff0;font-size:13px">河北板块</span>
<span class="lg" style="left:188px;top:127px;color:#0f0;font-size:13px">解禁日期:</span>
<span class="lg" style="left:15px;top:154px;color:#f00;font-size:13px">风格:</span><span class="lg" style="left:51px;top:154px;color:#ff0;font-size:13px;word-spacing:-1.5px">融资融券 高股息股 高分红股 户数增加 绩优股 沪股通标的 MSCI中盘</span>

<!-- chart labels -->
<span class="lg" style="left:871px;top:102px;color:#ff0;font-size:13px">龙逃顶!</span>
<span class="lg" style="left:885px;top:110px;color:#aaa;font-size:12px">34.42</span>
<span class="lg" style="left:795px;top:269px;color:#ff0;font-size:13px">龙</span>
<span class="lg" style="left:802px;top:281px;color:#aaa;font-size:12px">29.58</span>
<span class="lg" style="left:810px;top:204px;color:#f00;font-size:13px;font-weight:400">下探</span>
<span class="lg" style="left:810px;top:222px;color:#ff0;font-size:12px">龙</span>
<span class="lg" style="left:792px;top:372px;color:#f00;font-size:13px">风口形成</span>
<span class="lg" style="left:781px;top:358px;color:#aaa;font-size:12px;font-weight:400">狙击</span>
<span class="lg" style="left:780px;top:312px;color:#ff0;font-size:12px">亮剑</span>
<span class="lg" style="left:789px;top:325px;color:#aaa;font-size:12px">23</span>
<span class="lg" style="left:66px;top:337px;color:#f00;font-size:13px;font-weight:400">下探</span>
<span class="lg" style="left:111px;top:329px;color:#f00;font-size:13px;font-weight:400">下探</span>
<span class="lg" style="left:430px;top:331px;color:#f00;font-size:13px;font-weight:400">下探</span>
<span class="lg" style="left:156px;top:318px;color:#ff0;font-size:13px">逃顶!</span>
<span class="lg" style="left:355px;top:365px;color:#aaa;font-size:12px">←20.61</span>
<span class="lg" style="left:520px;top:361px;color:#aaa;font-size:12px;font-weight:400">狙击</span>
<span class="lg" style="left:583px;top:361px;color:#aaa;font-size:12px;font-weight:400">狙击</span>
<span class="lg" style="left:0;top:437px;color:#707070;font-size:13px;font-weight:400">用到未来数据</span>
<span class="lg" style="left:669px;top:449px;color:#f33;font-size:11px">$</span>
<span class="lg" style="left:864px;top:449px;color:#f88;font-size:12px">涨 榜</span>
<span class="lg" style="left:1031px;top:449px;color:#9df;font-size:12px">财</span>
<span class="lg" style="left:1252px;top:154px;color:#ff0;font-size:13px">机构量化评分系统</span>
<span class="lg" style="left:1252px;top:168px;color:#f00;font-size:13px">机构评分:</span><span class="lg" style="left:1320px;top:168px;color:#f00;font-size:13px">60.00</span>
<span class="lg" style="left:1252px;top:183px;color:#3ff;font-size:13px">今日阻力:</span><span class="lg" style="left:1320px;top:183px;color:#3ff;font-size:13px">28.06</span>
<span class="lg" style="left:1252px;top:198px;color:#f88;font-size:13px">今日支撑:</span><span class="lg" style="left:1320px;top:198px;color:#f88;font-size:13px">27.62</span>
<span class="lg" style="left:1252px;top:213px;color:#fff;font-size:13px">制胜巅峰</span>
<span class="lg" style="left:1510px;top:242px;width:53px;overflow:hidden;color:#90f;font-size:13px">..洗盘攻击</span>
<span class="lg" style="left:127px;top:799px;color:#ff0;font-size:13px">介入</span>
<span class="lg" style="left:643px;top:661px;color:#f00;font-size:13px">加持</span>
<span class="lg" style="left:810px;top:661px;color:#f00;font-size:13px">加持</span>

<!-- axes -->
<span class="ax" style="top:76px">36.00</span><span class="ax" style="top:114px">34.00</span><span class="ax" style="top:151px">32.00</span><span class="ax" style="top:189px">30.00</span><span class="ax" style="top:226px">28.00</span><span class="ax" style="top:264px">26.00</span><span class="ax" style="top:301px">24.00</span><span class="ax" style="top:339px">22.00</span><span class="ax" style="top:376px">20.00</span><span class="ax" style="top:414px">18.00</span>
<span class="ax" style="top:476px;letter-spacing:-1px">100.00</span><span class="ax" style="top:524px">90.00</span><span class="ax" style="top:569px">80.00</span><span class="ax" style="top:615px">70.00</span><span class="ax" style="top:661px">60.00</span><span class="ax" style="top:707px">50.00</span><span class="ax" style="top:753px">40.00</span><span class="ax" style="top:801px">30.00</span><span class="ax" style="top:846px">20.00</span>

<!-- lower header -->
<span class="h h2" style="left:17px;color:#c8c8c8;font-weight:400;font-size:13px">资金方向</span>
<span class="h h2" style="left:74px;color:#50a0ff">生命线: 67.62</span>
<span class="h h2" style="left:165px;color:#f00">资金方向: 22.42</span>
<span class="h h2" style="left:269px;color:#ff0">资金拐点: 20.79</span>
<span class="h h2" style="left:372px;color:#fff">多空分界: 50.00</span>
<span class="h h2" style="left:467px;color:#f00">低吸: 0.00</span>
<span class="h h2" style="left:527px;color:#0f0">高抛: 100.00</span>

<!-- date row -->
<span class="lg" style="left:4px;top:955px;color:#f33;font-size:13px">2025年</span>
<span class="lg" style="left:203px;top:955px;color:#f33;font-size:13px">8</span>
<span class="lg" style="left:521px;top:955px;color:#f33;font-size:13px">9</span>
<span class="lg" style="left:856px;top:955px;color:#f33;font-size:13px">10</span>
<span class="lg" style="left:1114px;top:955px;color:#f33;font-size:13px">11</span>
<span class="lg" style="left:1417px;top:955px;color:#f33;font-size:13px">12</span>
<span class="lg" style="left:1575px;top:955px;color:#c0c0c0;font-size:13px">日线</span>

<!-- buttons -->
<span class="btn" style="left:0;width:41px">指标A</span><span class="btn" style="left:41px;width:32px">窗口</span><span class="btn" style="left:73px;width:35px">WOL</span><span class="btn" style="left:108px;width:55px">双紫擒龙</span><span class="btn" style="left:163px;width:56px">强势起爆</span><span class="btn" style="left:219px;width:34px">均线</span><span class="btn" style="left:253px;width:31px">擒龙</span><span class="btn" style="left:284px;width:55px">镇店之宝</span><span class="btn" style="left:339px;width:56px">飞碟妖龙</span><span class="btn" style="left:395px;width:45px">主进出</span><span class="btn" style="left:440px;width:79px">十全十美指标</span><span class="btn" style="left:519px;width:32px">加仓</span><span class="btn" style="left:551px;width:33px">转点</span><span class="btn" style="left:584px;width:38px">资金2</span><span class="btn" style="left:622px;width:44px">宁波敢</span><span class="btn" style="left:666px;width:31px">AI龙</span><span class="btn" style="left:697px;width:33px">顶底</span><span class="btn" style="left:730px;width:55px;color:#3ff">资金方向</span><span class="btn" style="left:785px;width:44px">主控盘</span><span class="btn" style="left:829px;width:44px">战神号</span><span class="btn" style="left:873px;width:57px">动能二号</span><span class="btn" style="left:930px;width:43px">飞碟妖</span><span class="btn" style="left:973px;width:57px">财神到家</span><span class="btn" style="left:1030px;width:43px">超级进</span><span class="btn" style="left:1073px;width:32px">暗盘</span><span class="btn" style="left:1105px;width:45px">全仓买</span><span class="btn" style="left:1150px;width:55px">游资里朝</span><span class="btn" style="left:1205px;width:32px">多空</span><span class="btn" style="left:1237px;width:55px">短线情绪</span><span class="btn" style="left:1292px;width:57px">神针启动</span><span class="btn" style="left:1349px;width:56px">冰火里能</span><span class="btn" style="left:1405px;width:56px">趋势多空</span><span class="btn" style="left:1461px;width:14px">&gt;</span><span class="btn" style="left:1480px;width:43px;border-left:1px solid #a00000">指标B</span><span class="btn" style="left:1523px;width:41px">模 板</span><span class="btn" style="left:1564px;width:24px">+</span><span class="btn" style="left:1588px;width:26px">-</span>
<span class="btn btn2" style="left:0;width:41px">扩展∧</span><span class="btn btn2" style="left:41px;width:54px">关联报价</span><span class="btn btn2" style="left:95px;width:57px">资金流向</span><span class="btn btn2" style="left:152px;width:54px;color:#c8c800">综合资讯</span><span class="btn btn2" style="left:206px;width:57px;color:#c8c800">板块资讯</span>
<span class="btn btn2" style="left:1516px;width:48px;color:#c8c800;border-left:1px solid #a00000">图文F10</span><span class="btn btn2" style="left:1564px;width:51px;color:#c8c800">侧边栏《</span>

<!-- ticker -->
<span class="tk" style="left:0">率料为3.25%至3.</span>
<span class="tk" style="left:133px;letter-spacing:-.3px">AI聊天机器人格局生变：Gemini下载份额攀升至33% 与ChatGPT差距缩</span>
<span class="tk" style="left:545px;letter-spacing:-.15px">精进电动(688280)2025年12月9日投资者关系活动主要内容</span>
<span class="tk" style="left:1088px;letter-spacing:.35px">*[发行与上市提示]可转债发行与上市提示</span>
<span class="tk" style="left:1352px;letter-spacing:.35px">[其他提示]最新基金分红提示</span>
<span class="tk" style="left:1548px;letter-spacing:.2px">[发行与上市提示]公司发行审核提示</span>
<span class="tk" style="left:1780px;width:115px;overflow:hidden">[再融资提示]新三板增发</span>

<!-- status -->
<span class="st" style="left:25px;color:#eee">上证</span><span class="st" style="left:61px;color:#3cb45a">3909.52</span><span class="st" style="left:130px;color:#3cb45a">-14.56</span><span class="st" style="left:184px;color:#3cb45a">-0.37%</span><span class="st" style="left:240px;color:#eee">7812亿</span>
<span class="st" style="left:300px;color:#eee">深证</span><span class="st" style="left:335px;color:#3cb45a">13277.36</span><span class="st" style="left:404px;color:#3cb45a">-52.63</span><span class="st" style="left:458px;color:#3cb45a">-0.39%</span><span class="st" style="left:515px;color:#eee">11228亿</span>
<span class="st" style="left:574px;color:#eee">创业</span><span class="st" style="left:610px;color:#e03c3c">3209.60</span><span class="st" style="left:683px;color:#e03c3c">19.33</span><span class="st" style="left:733px;color:#e03c3c">0.61%</span><span class="st" style="left:785px;color:#eee">5350亿</span>
<span class="st" style="left:852px;color:#ddd;font-size:13px">总成交</span><span class="st" style="left:903px;color:#eee">19179亿</span>
<span class="st" style="left:987px;color:#ddd;font-size:12px">3</span><span class="st" style="left:1002px;color:#eee;font-size:13px">已连接</span>
<span class="st" style="left:1845px;color:#a8d8f8">16:43:22</span>

<!-- quote panel -->
<span class="t" style="left:1632px;top:33px;font-size:19px;height:22px;line-height:22px;color:#66ffff">养元饮品</span>
<span class="v" style="left:1712px;top:35px;color:#c0c0c0;letter-spacing:.3px">603156</span>
<span class="t bd" style="left:1767px;top:31px;font-size:10px;color:#f33">R</span>
<span class="t" style="left:1761px;top:41px;font-size:10px;color:#f33">500</span>
<span class="t bd" style="left:1617px;top:62px;height:22px;line-height:22px;font-size:19px;color:#ff3232">27.94</span>
<span class="t bd" style="left:1732px;top:62px;height:22px;line-height:22px;font-size:19px;color:#ff3232">0.13</span>
<span class="t bd" style="right:28px;top:62px;height:22px;line-height:22px;font-size:19px;color:#ff3232">0.47%</span>

<span class="c l" style="top:86px">卖五</span><span class="v a" style="top:86px">27.98</span><span class="v y" style="top:86px">128</span>
<span class="c l" style="top:104px">卖四</span><span class="v a" style="top:104px">27.97</span><span class="v y" style="top:104px">55</span>
<span class="c l" style="top:122px">卖三</span><span class="v a" style="top:122px">27.96</span><span class="v y" style="top:122px">28</span>
<span class="c l" style="top:140px">卖二</span><span class="v a" style="top:140px">27.95</span><span class="v y" style="top:140px">202</span>
<span class="c l" style="top:158px">卖一</span><span class="v a" style="top:158px">27.94</span><span class="v y" style="top:158px">19</span>
<span class="c l" style="top:178px">买一</span><span class="v a" style="top:178px">27.93</span><span class="v y" style="top:178px">49</span>
<span class="c l" style="top:196px">买二</span><span class="v a" style="top:196px">27.92</span><span class="v y" style="top:196px">73</span>
<span class="c l" style="top:214px">买三</span><span class="v a" style="top:214px">27.91</span><span class="v y" style="top:214px">12</span>
<span class="c l" style="top:232px">买四</span><span class="v a" style="top:232px">27.90</span><span class="v y" style="top:232px">475</span>
<span class="c l" style="top:250px">买五</span><span class="v a" style="top:250px">27.89</span><span class="v y" style="top:250px">43</span>

<span class="c l" style="top:271px">今开</span><span class="v a" style="top:271px;color:#00e000">27.68</span><span class="c k" style="top:271px">均价</span><span class="v rr" style="top:271px;color:#ff3232">27.95</span>
<span class="c l" style="top:290px">最高</span><span class="v a" style="top:290px">28.12</span><span class="c k" style="top:290px">量比</span><span class="v rr" style="top:290px;color:#ff3232">1.05</span>
<span class="c l" style="top:309px">最低</span><span class="v a" style="top:309px;color:#00e000">27.68</span><span class="c k" style="top:309px">市值</span><span class="v rr" style="top:309px;color:#c0c0c0">352.1亿</span>
<span class="c l" style="top:328px">现量</span><span class="v a" style="top:328px;color:#c000c0">865</span><span class="c k" style="top:328px">总量</span><span class="v rr" style="top:328px;color:#c0c0c0">52812</span>
<span class="c l" style="top:347px">外盘</span><span class="v a" style="top:347px">29530</span><span class="c k" style="top:347px">内盘</span><span class="v rr" style="top:347px;color:#00e000">23282</span>

<span class="c l" style="top:368px">换手</span><span class="v a" style="top:368px;color:#c0c0c0">0.42%</span><span class="c k" style="top:368px">股本</span><span class="v rr" style="top:368px;color:#c0c0c0">12.6亿</span>
<span class="c l" style="top:387px">净资</span><span class="v a" style="top:387px;color:#c0c0c0">7.13</span><span class="c k" style="top:387px">流通</span><span class="v rr" style="top:387px;color:#c0c0c0">12.6亿</span>
<span class="c l" style="top:406px">收益㈢</span><span class="v a" style="top:406px;color:#c0c0c0">0.890</span><span class="c k" style="top:406px;font-size:14.5px">PE(动)</span><span class="v rr" style="top:406px;color:#c0c0c0">23.6</span>

<span class="c l" style="top:429px">交易状态:</span><span class="c" style="left:1692px;top:429px">闭市阶段</span><span class="v" style="left:1765px;top:429px;color:#c0c0c0">15:00:04</span>
<span class="c l" style="top:450px">主力净额</span>
<span class="v" style="top:450px;color:#00e000;right:67px">-848.4万</span><span class="v rr" style="top:450px;color:#00e000">-6%</span>

<!-- ticks -->
<div class="r" style="top:473px"><i>14:55</i><b>27.92</b><u>9</u><s class="B">B</s><em>1</em></div>
<div class="r" style="top:490.8px"><b>27.90</b><u>51</u><s>S</s><em>5</em></div>
<div class="r" style="top:508.5px"><b>27.92</b><u>12</u><s class="B">B</s><em>2</em></div>
<div class="r" style="top:526.3px"><b>27.92</b><u>7</u><s class="B">B</s><em>2</em></div>
<div class="r" style="top:544.1px"><b>27.92</b><u>6</u><s class="B">B</s><em>2</em></div>
<div class="r" style="top:561.9px"><b>27.90</b><u>5</u><s>S</s><em>3</em></div>
<div class="r" style="top:579.6px"><b>27.90</b><u>12</u><s>S</s><em>3</em></div>
<div class="r" style="top:597.4px"><b>27.90</b><u>6</u><s>S</s><em>3</em></div>
<div class="r" style="top:615.2px"><b>27.90</b><u>7</u><s>S</s><em>2</em></div>
<div class="r" style="top:632.9px"><b>27.92</b><u>7</u><s class="B">B</s><em>3</em></div>
<div class="r" style="top:650.7px"><b>27.92</b><u>15</u><s class="B">B</s><em>6</em></div>
<div class="r" style="top:668.5px"><i>14:56</i><b>27.92</b><u>15</u><s class="B">B</s><em>10</em></div>
<div class="r" style="top:686.2px"><b>27.92</b><u>105</u><s class="B">B</s><em>11</em></div>
<div class="r" style="top:704px"><b>27.91</b><u>18</u><s>S</s><em>5</em></div>
<div class="r" style="top:721.8px"><b>27.92</b><u>24</u><s class="B">B</s><em>9</em></div>
<div class="r" style="top:739.6px"><b>27.92</b><u>21</u><s>S</s><em>4</em></div>
<div class="r" style="top:757.3px"><b>27.92</b><u>8</u><s>S</s><em>3</em></div>
<div class="r" style="top:775.1px"><b>27.92</b><u>1</u><s>S</s><em>1</em></div>
<div class="r" style="top:792.9px"><b>27.92</b><u>2</u><s>S</s><em>1</em></div>
<div class="r" style="top:810.6px"><b>27.93</b><u>43</u><s class="B">B</s><em>7</em></div>
<div class="r" style="top:828.4px"><b>27.92</b><u>11</u><s>S</s><em>4</em></div>
<div class="r" style="top:846.2px"><b>27.93</b><u>5</u><s class="B">B</s><em>1</em></div>
<div class="r" style="top:864px"><b>27.93</b><u>12</u><s>S</s><em>2</em></div>
<div class="r" style="top:881.7px"><b>27.93</b><u>34</u><s>S</s><em>11</em></div>
<div class="r" style="top:899.5px"><b>27.93</b><u>9</u><s>S</s><em>3</em></div>
<div class="r" style="top:917.3px"><b>27.95</b><u>24</u><s class="B">B</s><em>8</em></div>
<div class="r" style="top:935px"><i>14:57</i><b>27.94</b><u>4</u><s>S</s><em>1</em></div>
<div class="r" style="top:952.8px"><i>15:00</i><b>27.94</b><u style="color:#c000c0">865</u><em>206</em></div>

<!-- tabs -->
<span class="tab" style="left:1615px;width:29px;color:#3ff">笔</span><span class="tab" style="left:1644px;width:32px">价</span><span class="tab" style="left:1676px;width:30px">细</span><span class="tab" style="left:1706px;width:31px">势</span><span class="tab" style="left:1737px;width:31px">联</span><span class="tab" style="left:1768px;width:31px">值</span><span class="tab" style="left:1799px;width:31px">主</span><span class="tab" style="left:1830px;width:32px">逆</span><span class="tab" style="left:1862px;width:33px">筹</span>

<!-- sidebar text -->
<span class="sn" style="top:388px;font-size:9px;font-weight:700">RSI</span>
<span class="sn" style="top:410px;font-size:13px;font-weight:700;color:#c33">$</span>
<span class="sn" style="top:218px;font-size:11px">F10</span>
<span class="sn" style="top:288px;font-size:11px">F12</span>
<span class="sn" style="top:311px;font-size:10px">f(x)</span>
<span class="sn" style="top:488px;font-size:11px">F5</span>
<span class="sn" style="top:533px">1</span><span class="sn" style="top:555px">5</span><span class="sn" style="top:578px">15</span><span class="sn" style="top:601px">30</span><span class="sn" style="top:623px">60</span><span class="sn" style="top:647px;font-size:14px">日</span><span class="sn" style="top:670px;font-size:14px">周</span><span class="sn" style="top:692px;font-size:14px">月</span><span class="sn" style="top:714px">N</span><span class="sn" style="top:738px;font-size:14px">多</span><span class="sn" style="top:760px;font-size:14px">季</span><span class="sn" style="top:782px;font-size:14px">年</span>

</body></html>
